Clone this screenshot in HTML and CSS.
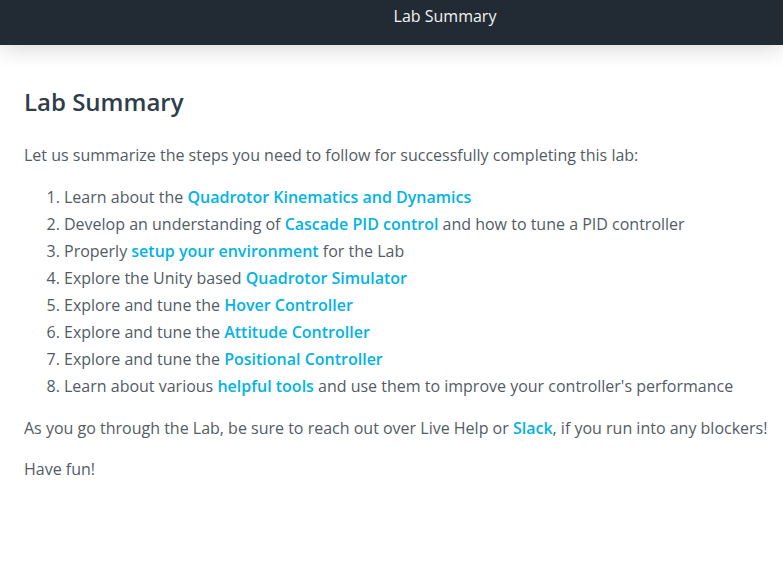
FILE: index.html
```html
<!DOCTYPE html>
<html lang="en">
<head>
<meta charset="utf-8">
<title>Lab Summary</title>
<link rel="stylesheet" href="styles.css">
</head>
<body>
<header class="topbar">
  <div class="topbar-title">Lab Summary</div>
</header>
<main class="content">
  <h1 class="title">Lab Summary</h1>
  <p class="para">Let us summarize the steps you need to follow for successfully completing this lab:</p>
  <ol class="steps">
    <li>Learn about the <a class="link" href="#">Quadrotor Kinematics and Dynamics</a></li>
    <li>Develop an understanding of <a class="link" href="#">Cascade PID control</a> and how to tune a PID controller</li>
    <li>Properly <a class="link" href="#">setup your environment</a> for the Lab</li>
    <li>Explore the Unity based <a class="link" href="#">Quadrotor Simulator</a></li>
    <li>Explore and tune the <a class="link" href="#">Hover Controller</a></li>
    <li>Explore and tune the <a class="link" href="#">Attitude Controller</a></li>
    <li>Explore and tune the <a class="link" href="#">Positional Controller</a></li>
    <li>Learn about various <a class="link" href="#">helpful tools</a> and use them to improve your controller's performance</li>
  </ol>
  <p class="para">As you go through the Lab, be sure to reach out over Live Help or <a class="link" href="#">Slack</a>, if you run into any blockers!</p>
  <p class="para">Have fun!</p>
</main>
</body>
</html>
```
FILE: styles.css
```css
html, body {
  margin: 0;
  padding: 0;
  background: #ffffff;
}
body {
  font-family: "Open Sans", "Noto Sans", sans-serif;
  color: #525c65;
  overflow: hidden;
}
.topbar {
  height: 45px;
  background: #222b33;
  box-shadow: 0 2px 24px rgba(0, 0, 0, 0.18);
  display: flex;
  align-items: flex-start;
  justify-content: center;
  padding-left: 107px;
  position: relative;
}
.topbar-title {
  color: #f2f4f5;
  font-size: 16px;
  line-height: 32px;
}
.content {
  padding: 0 4px 0 24px;
}
.title {
  margin: 39px 0 23px;
  font-size: 24px;
  font-weight: 600;
  line-height: 36px;
  color: #2e3d49;
}
.para {
  margin: 16px 0;
  font-size: 16px;
  line-height: 25px;
  white-space: nowrap;
}
.steps {
  margin: 16px 0;
  padding-left: 40px;
  font-size: 16px;
  line-height: 27px;
}
.link {
  color: #02b3e4;
  font-weight: 600;
  text-decoration: none;
}
```
